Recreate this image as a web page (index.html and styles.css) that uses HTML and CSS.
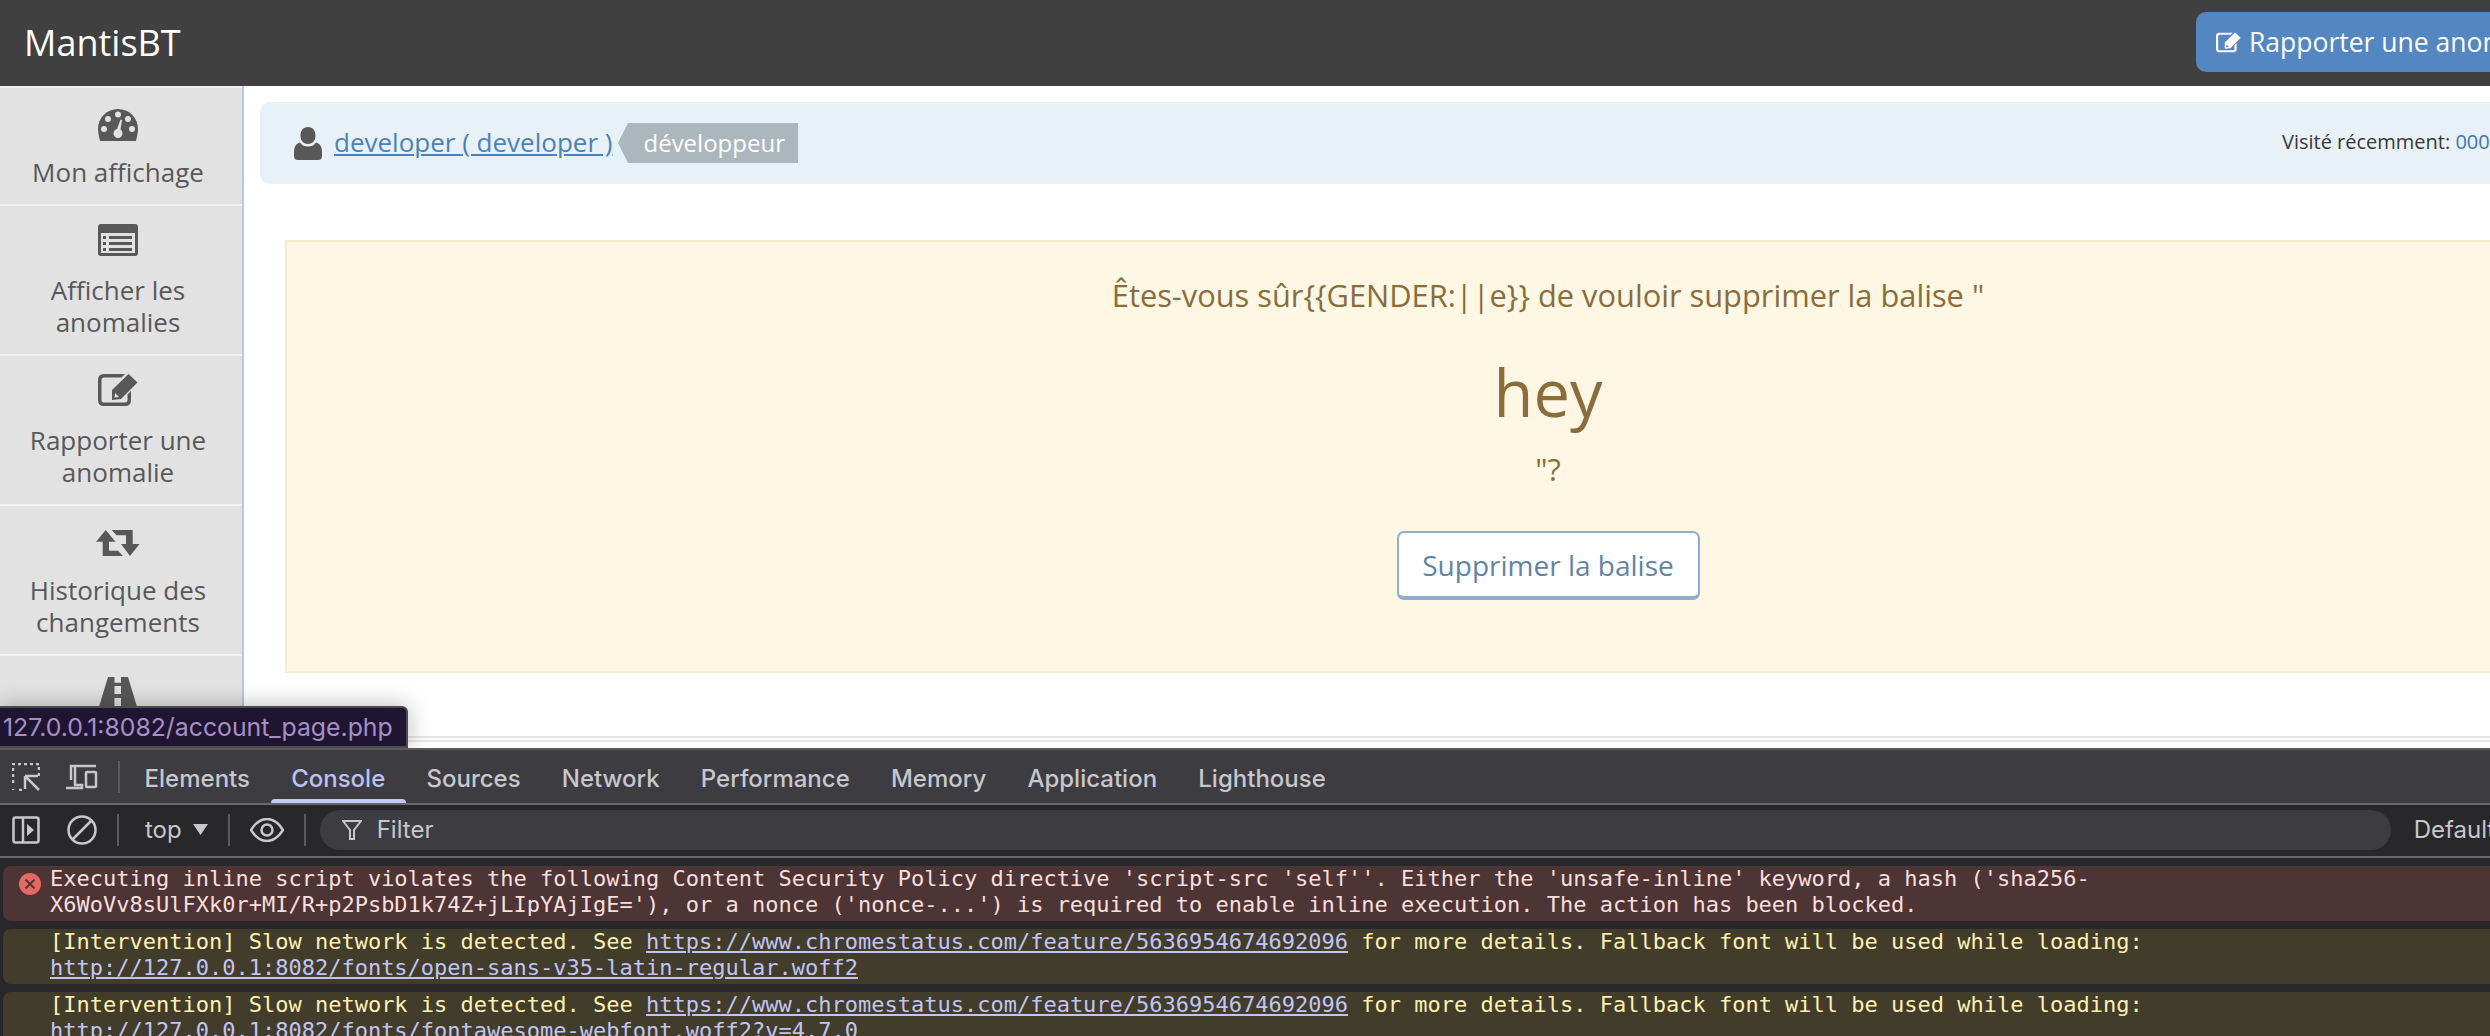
FILE: index.html
```html
<!DOCTYPE html>
<html lang="fr">
<head>
  <meta charset="UTF-8" />
  <title>MantisBT</title>
  <link rel="stylesheet" href="styles.css">
</head>
<body>
  <div class="page">
    <header class="navbar">
      <div class="brand">MantisBT</div>
      <a class="report-btn">
        <svg class="report-icon" viewBox="0 0 40 32"><use href="#i-edit"/></svg>
        Rapporter une anomalie
      </a>
    </header>

    <div class="layout">
      <nav class="sidebar">
        <a class="side-item">
          <svg class="side-icon" viewBox="0 0 40 38">
            <path d="M0 25a20 20 0 0 1 40 0q0 4-2 12H2Q0 29 0 25z"/>
            <g class="cut">
              <circle cx="6" cy="25" r="3"/><circle cx="10" cy="15" r="3"/><circle cx="20" cy="10.500" r="3"/><circle cx="30" cy="15" r="3"/><circle cx="34" cy="25" r="3"/>
              <circle cx="20" cy="29.500" r="4.500"/><path d="M18 28l4.500-12.500 1.500.5-2 13z"/>
            </g>
          </svg>
          <span>Mon affichage</span>
        </a>
        <a class="side-item">
          <svg class="side-icon" viewBox="0 0 40 38">
            <rect y="2" width="40" height="32" rx="3"/>
            <g class="cut">
              <rect x="3" y="11" width="34" height="20"/>
            </g>
            <path d="M5 14h3v3H5zM11 14h23v3H11zM5 20h3v3H5zM11 20h23v3H11zM5 26h3v3H5zM11 26h23v3H11z"/>
          </svg>
          <span>Afficher les anomalies</span>
        </a>
        <a class="side-item">
          <svg class="side-icon" viewBox="0 0 40 38"><use href="#i-edit" y="2"/></svg>
          <span>Rapporter une anomalie</span>
        </a>
        <a class="side-item">
          <svg class="side-icon" viewBox="0 0 44 38">
            <path d="M9.700 8l9.800 11.700H13v9h9l5 5.300H6.700V19.700H0z"/>
            <path d="M15.700 8h21v14h6.800L34 34l-9-12h5v-8.700h-9.500z"/>
          </svg>
          <span>Historique des changements</span>
        </a>
        <a class="side-item">
          <svg class="side-icon" viewBox="0 0 40 38">
            <path d="M10 5h6.500v5.700H23V5h7l10 33H23V26h-6.500v12H0z"/>
            <g class="cut"><rect x="16.500" y="14" width="6.500" height="8"/></g>
          </svg>
          <span>Feuille de route</span>
        </a>
      </nav>

      <main class="content">
        <div class="crumbs">
          <div class="crumb-user">
            <svg class="user-icon" viewBox="0 0 28 33">
              <path d="M14 0c5 0 7.500 4 7.500 8.500S19 17 14 17 6.500 13 6.500 8.500 9 0 14 0zM6 15.500c2 3 5 4 8 4s6-1 8-4c4 1 6 4 6 10V29q0 4-4 4H4q-4 0-4-4v-3.500c0-6 2-9 6-10z"/>
            </svg>
            <a class="user-link">developer ( developer )</a>
            <span class="role-tag">développeur</span>
          </div>
          <div class="recent">Visité récemment: <a>0000001</a></div>
        </div>

        <div class="alert">
          <p class="alert-text">Êtes-vous sûr{{GENDER:||e}} de vouloir supprimer la balise "</p>
          <p class="alert-tag">hey</p>
          <p class="alert-end">"?</p>
          <button class="delete-btn">Supprimer la balise</button>
        </div>

        <div class="footer-lines"></div>
      </main>
    </div>

    <div class="status-tip">127.0.0.1:8082/account_page.php</div>
  </div>

  <section class="devtools">
    <div class="dt-tabs">
      <svg class="dt-icon" viewBox="0 0 28 28">
        <path class="dash" d="M1 20V1h26v14M1 26v1M7 27h5"/>
        <path d="M13 13h13M13 13v13M14 14l13 13" class="arrow"/>
      </svg>
      <svg class="dt-icon device" viewBox="0 0 32 26">
        <path d="M5 16V2h25M0 24h16v-3H9V2"/>
        <rect x="20" y="8" width="10" height="15" rx="1"/>
      </svg>
      <i class="dt-sep"></i>
      <a class="dt-tab">Elements</a>
      <a class="dt-tab active">Console</a>
      <a class="dt-tab">Sources</a>
      <a class="dt-tab">Network</a>
      <a class="dt-tab">Performance</a>
      <a class="dt-tab">Memory</a>
      <a class="dt-tab">Application</a>
      <a class="dt-tab">Lighthouse</a>
    </div>

    <div class="dt-toolbar">
      <svg class="dt-icon" viewBox="0 0 28 28">
        <rect x="1.500" y="1.500" width="25" height="25" rx="2"/>
        <path d="M11 1.500v25"/>
        <path class="solid" d="M15 8l7 6-7 6z"/>
      </svg>
      <svg class="dt-icon clear" viewBox="0 0 30 30">
        <circle cx="15" cy="15" r="13.500"/>
        <path d="M6 24L24 6"/>
      </svg>
      <i class="dt-sep"></i>
      <span class="dt-context">top</span>
      <svg class="dt-caret" viewBox="0 0 15 11"><path d="M0 0h15l-7.500 11z"/></svg>
      <i class="dt-sep"></i>
      <svg class="dt-icon eye" viewBox="0 0 34 24">
        <path d="M1 12C6 4 11 1 17 1s11 3 16 11c-5 8-10 11-16 11S6 20 1 12z"/>
        <circle cx="17" cy="12" r="5.500"/>
      </svg>
      <i class="dt-sep"></i>
      <div class="dt-filter">
        <svg class="filter-icon" viewBox="0 0 20 20"><path d="M1 1h18l-7 9v9h-4v-9z"/></svg>
        Filter
      </div>
      <span class="dt-levels">Default levels</span>
    </div>

    <div class="log">
      <div class="log-row error">
        <svg class="log-icon" viewBox="0 0 22 22">
          <circle cx="11" cy="11" r="11"/>
          <path d="M6.500 6.500l9 9M15.500 6.500l-9 9"/>
        </svg>
        Executing inline script violates the following Content Security Policy directive 'script-src 'self''. Either the 'unsafe-inline' keyword, a hash ('sha256-<br>X6WoVv8sUlFXk0r+MI/R+p2PsbD1k74Z+jLIpYAjIgE='), or a nonce ('nonce-...') is required to enable inline execution. The action has been blocked.
      </div>
      <div class="log-row warn">
        [Intervention] Slow network is detected. See <a>https://www.chromestatus.com/feature/5636954674692096</a> for more details. Fallback font will be used while loading:<br><a>http://127.0.0.1:8082/fonts/open-sans-v35-latin-regular.woff2</a>
      </div>
      <div class="log-row warn">
        [Intervention] Slow network is detected. See <a>https://www.chromestatus.com/feature/5636954674692096</a> for more details. Fallback font will be used while loading:<br><a>http://127.0.0.1:8082/fonts/fontawesome-webfont.woff2?v=4.7.0</a>
      </div>
    </div>
  </section>

  <svg class="sprites" width="0" height="0">
    <symbol id="i-edit" viewBox="0 0 40 32" width="40" height="32">
      <path d="M27 0H6Q0 0 0 6v20q0 6 6 6h21q6 0 6-6v-9l-3.500 3.500V26q0 2.500-2.500 2.500H6q-2.500 0-2.500-2.500V6q0-2.500 2.500-2.500h17.500z"/>
      <path d="M14 16L30.500 0l9 8.500L23 25l-9 1zM17 19l-.5 4.500 4.500-.5z" fill-rule="evenodd"/>
    </symbol>
  </svg>
</body>
</html>
```

FILE: styles.css
```css
* {
  box-sizing: border-box;
}

html, body {
  margin: 0;
  height: 100%;
}

body {
  height: 1036px;
  overflow: hidden;
  font-family: "Open Sans", sans-serif;
  display: flex;
  flex-direction: column;
  background: #fff;
}

.sprites {
  position: absolute;
}

.page {
  position: relative;
  height: 748px;
  flex: none;
  overflow: hidden;
}

/* top bar */
.navbar {
  height: 86px;
  width: 2900px;
  background: #404040;
  display: flex;
  align-items: center;
  padding: 0 0 0 24px;
}

.brand {
  width: 2172px;
  margin-top: -2px;
  color: #fff;
  font-size: 36px;
}

.report-btn {
  display: flex;
  align-items: center;
  gap: 8px;
  height: 60px;
  margin-top: -2px;
  padding: 0 20px;
  background: #5486c2;
  border-radius: 10px;
  color: #fff;
  font-size: 26.500px;
}

.report-icon {
  width: 25px;
  height: 21px;
  fill: #fff;
}

/* sidebar + content */
.layout {
  display: flex;
  height: 662px;
  width: 2900px;
}

.sidebar {
  width: 244px;
  flex: none;
  padding-top: 2px;
  background: #f2f2f2;
  border-right: 2px solid #b4cbe0;
  overflow: hidden;
}

.side-item {
  display: block;
  padding: 16px 11px 16px 5px;
  margin-bottom: 2px;
  background: #e2e2e2;
  color: #585858;
  font-size: 26px;
  line-height: 32px;
  text-align: center;
}

.side-item span {
  display: block;
}

.side-icon {
  display: block;
  height: 38px;
  width: 40px;
  margin: 0 auto 14px;
  fill: #585858;
  overflow: visible;
}

.side-item:nth-child(4) .side-icon {
  width: 44px;
}

.cut {
  fill: #e2e2e2;
}

.content {
  flex: 1;
  padding: 16px 0 0 16px;
}

.crumbs {
  height: 82px;
  background: #e8f1f7;
  border-radius: 10px 0 0 10px;
  display: flex;
  align-items: center;
  padding-left: 34px;
}

.crumb-user {
  width: 1988px;
  display: flex;
  align-items: center;
}

.user-icon {
  width: 28px;
  height: 33px;
  fill: #585858;
  margin-right: 12px;
}

.user-link {
  margin-top: -3px;
  color: #4a83bb;
  font-size: 26px;
  text-decoration: underline;
}

.role-tag {
  position: relative;
  margin-left: 16px;
  height: 40px;
  line-height: 40px;
  padding: 0 13px 0 15px;
  background: #abb7bd;
  color: #fff;
  font-size: 24px;
}

.role-tag::before {
  content: "";
  position: absolute;
  left: -10px;
  top: 0;
  border-style: solid;
  border-width: 20px 10px 20px 0;
  border-color: transparent #abb7bd transparent transparent;
}

.recent {
  margin-top: -3px;
  color: #393939;
  font-size: 20px;
  white-space: nowrap;
}

.recent a {
  color: #3a78b5;
}

.alert {
  margin: 56px 0 0 25px;
  width: 2526px;
  height: 433px;
  padding-top: 33px;
  background: #fdf7e3;
  border: 2px solid #f6edd0;
  color: #8a6d3b;
  text-align: center;
}

.alert p {
  margin: 0;
}

.alert-text {
  font-size: 30.800px;
  line-height: 40px;
}

.alert-tag {
  margin-top: 35px !important;
  font-size: 65px;
  line-height: 84px;
}

.alert-end {
  margin-top: 19px !important;
  font-size: 30.800px;
  line-height: 32px;
}

.delete-btn {
  display: block;
  margin: 46px auto 0;
  width: 303px;
  height: 69px;
  background: #fff;
  border: 2px solid #8eadcf;
  border-bottom-width: 4px;
  border-radius: 7px;
  color: #6283a8;
  font-family: inherit;
  font-size: 28px;
}

.footer-lines {
  margin-top: 63px;
  height: 6px;
  border-top: 2px solid #e5e5e5;
  border-bottom: 2px solid #e5e5e5;
}

.status-tip {
  position: absolute;
  left: 0;
  bottom: 0;
  width: 408px;
  height: 42px;
  padding-left: 3px;
  background: #1f1530;
  border: 2px solid #4d4a52;
  border-left: 0;
  border-radius: 0 6px 0 0;
  color: #a68fc6;
  font-family: Inter, sans-serif;
  font-size: 24.800px;
  line-height: 38px;
  white-space: nowrap;
  box-shadow: 0 0 24px rgba(0, 0, 0, 0.28);
}

/* devtools */
.devtools {
  flex: 1;
  background: #28282b;
  border-top: 2px solid #5a5a5f;
  font-family: Inter, sans-serif;
  color: #c7c7cc;
  overflow: hidden;
}

.dt-tabs {
  height: 55px;
  display: flex;
  align-items: center;
  padding-left: 12px;
  background: #3c3c41;
  border-bottom: 2px solid #68686c;
  font-size: 24px;
  font-weight: 500;
}

.dt-icon {
  flex: none;
  width: 28px;
  height: 28px;
  fill: none;
  stroke: #c7c7cc;
  stroke-width: 2.500;
}

.dt-icon .dash {
  stroke-dasharray: 3 3;
}

.dt-icon .solid {
  fill: #c7c7cc;
  stroke: none;
}

.device {
  width: 32px;
  height: 26px;
  margin-left: 26px;
}

.dt-sep {
  flex: none;
  width: 2px;
  height: 32px;
  margin: 0 20px;
  background: #5a5a5f;
}

.dt-tabs .dt-sep {
  margin-right: 4px;
}

.dt-tab {
  position: relative;
  height: 100%;
  padding: 0 20.600px;
  line-height: 58px;
}

.dt-tab.active {
  color: #bcc1f5;
}

.dt-tab.active::after {
  content: "";
  position: absolute;
  left: 0;
  right: 0;
  bottom: 0;
  height: 4px;
  background: #c4c7f7;
  border-radius: 4px 4px 0 0;
}

.dt-toolbar {
  height: 53px;
  display: flex;
  align-items: center;
  padding: 0 0 2px 12px;
  border-bottom: 2px solid #68686c;
  font-size: 24px;
  white-space: nowrap;
}

.clear {
  width: 30px;
  height: 30px;
  margin-left: 27px;
}

.dt-context {
  flex: none;
  margin-left: 6px;
}

.dt-caret {
  flex: none;
  width: 15px;
  height: 11px;
  margin-left: 11px;
  fill: #c7c7cc;
}

.dt-toolbar .dt-caret + .dt-sep {
  margin-left: 20px;
}

.eye {
  width: 34px;
  height: 24px;
}

.dt-filter {
  flex: none;
  width: 2071px;
  height: 40px;
  margin-left: -6px;
  padding-left: 22px;
  display: flex;
  align-items: center;
  gap: 15px;
  background: #3c3c41;
  border-radius: 20px;
}

.filter-icon {
  width: 20px;
  height: 20px;
  fill: none;
  stroke: #c7c7cc;
  stroke-width: 2;
}

.dt-levels {
  flex: none;
  margin-left: 23px;
}

.log {
  padding: 8px 0 0 3px;
  font-family: "DejaVu Sans Mono", monospace;
  font-size: 22px;
  line-height: 26px;
  white-space: nowrap;
}

.log-row {
  position: relative;
  height: 55px;
  margin-bottom: 8px;
  padding: 0 0 0 47px;
  border-radius: 8px 0 0 8px;
}

.log-row.error {
  background: #4d3535;
  color: #f9dedc;
}

.log-row.warn {
  background: #423c2a;
  color: #fdf0b0;
}

.log-row a {
  color: #c0c5f5;
  text-decoration: underline;
}

.log-icon {
  position: absolute;
  left: 16px;
  top: 7px;
  width: 22px;
  height: 22px;
  fill: #e46962;
  stroke: #4d3535;
  stroke-width: 1.800;
}

.log-icon circle {
  stroke: none;
}
```
